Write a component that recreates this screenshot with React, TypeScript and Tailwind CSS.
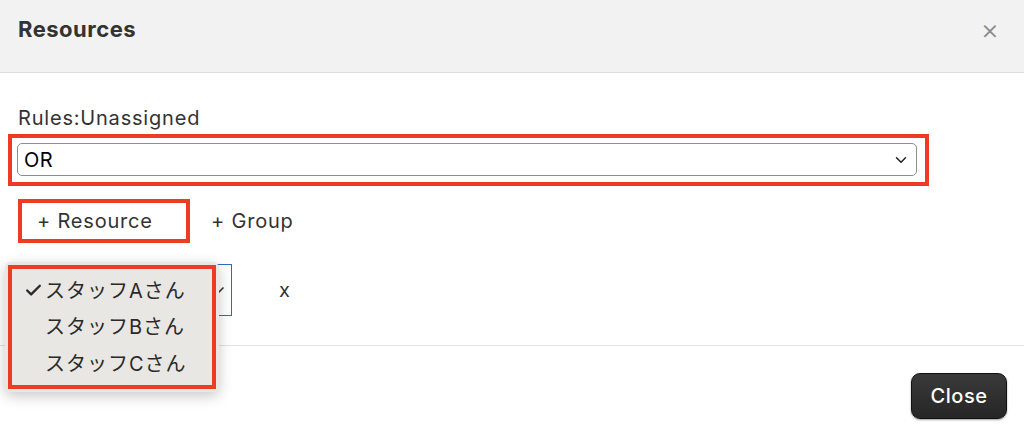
import { ChevronDown, Check } from 'lucide-react';

const font = { fontFamily: '"Helvetica Neue", Inter, "Noto Sans CJK JP", sans-serif' };

const staff = ['スタッフAさん', 'スタッフBさん', 'スタッフCさん'];

export default function App() {
  return (
    <div
      className="relative w-[1024px] h-[436px] overflow-hidden bg-white text-[#333]"
      style={font}
    >
      {/* header */}
      <div className="flex h-[73px] items-start justify-between border-b border-[#dedede] bg-[#f2f2f2] pl-[18px] pr-[25px] pt-[14px]">
        <h2 className="text-[22px] font-bold leading-[30px] tracking-[0.5px] text-[#333]">Resources</h2>
        <button className="text-[28px] font-light leading-[30px] text-[#8a8a8a]">×</button>
      </div>

      {/* body */}
      <div className="h-[272px] px-[8px] pt-[33px]">
        <div className="pl-[10px] text-[20px] leading-[24px] tracking-[0.8px] text-[#333]">Rules:Unassigned</div>

        <div className="mt-[4px] w-[921px] border-4 border-[#ee3b24] pb-[6px] pl-[5px] pr-[8px] pt-[5px]">
          <div className="flex h-[33px] items-center justify-between rounded-[5px] border border-[#8e8e8e] bg-white pl-[6px] pr-[6px]">
            <span className="text-[20px] tracking-[0.5px] text-black">OR</span>
            <ChevronDown className="h-[18px] w-[18px] text-[#222]" strokeWidth={2} />
          </div>
        </div>

        <div className="ml-[10px] mt-[13px] flex items-center gap-[21px]">
          <button className="h-[44px] w-[172px] border-4 border-[#ee3b24] pl-[15px] text-left text-[20px] tracking-[0.8px] text-[#333]">
            + Resource
          </button>
          <button className="text-[20px] tracking-[0.8px] text-[#333]">+ Group</button>
        </div>

        <div className="mt-[21px] flex items-center">
          <div className="ml-[9px] flex h-[52px] w-[215px] items-center justify-end border border-[#2f6dbb] bg-white pr-[4px]">
            <ChevronDown className="h-[16px] w-[16px] text-[#333]" strokeWidth={2.5} />
          </div>
          <span className="ml-[47px] text-[20px] text-[#333]">x</span>
        </div>
      </div>

      {/* footer */}
      <div className="flex justify-end border-t border-[#e3e3e3] pr-[17px] pt-[27px]">
        <button className="h-[46px] w-[96px] rounded-[9px] border border-[#111] bg-gradient-to-b from-[#3a3a3a] to-[#262626] text-[20px] font-medium tracking-[0.5px] text-white shadow-[0_1px_2px_rgba(0,0,0,0.4)]">
          Close
        </button>
      </div>

      {/* open dropdown */}
      <div className="absolute left-[5px] top-[262px] w-[214px] rounded-[6px] bg-[#e9e7e4] p-[3px] shadow-[0_4px_14px_rgba(0,0,0,0.22)]">
        <div className="flex h-[124px] flex-col justify-center border-4 border-[#ee3b24]">
          {staff.map((name, i) => (
            <div key={name} className="flex h-[36.5px] items-center text-[20px] text-[#2a2a2a]">
              <span className="flex w-[33px] justify-end pr-[2px]">
                {i === 0 && <Check className="h-[19px] w-[19px]" strokeWidth={3} />}
              </span>
              <span className="tracking-[1px]">{name}</span>
            </div>
          ))}
        </div>
      </div>
    </div>
  );
}
